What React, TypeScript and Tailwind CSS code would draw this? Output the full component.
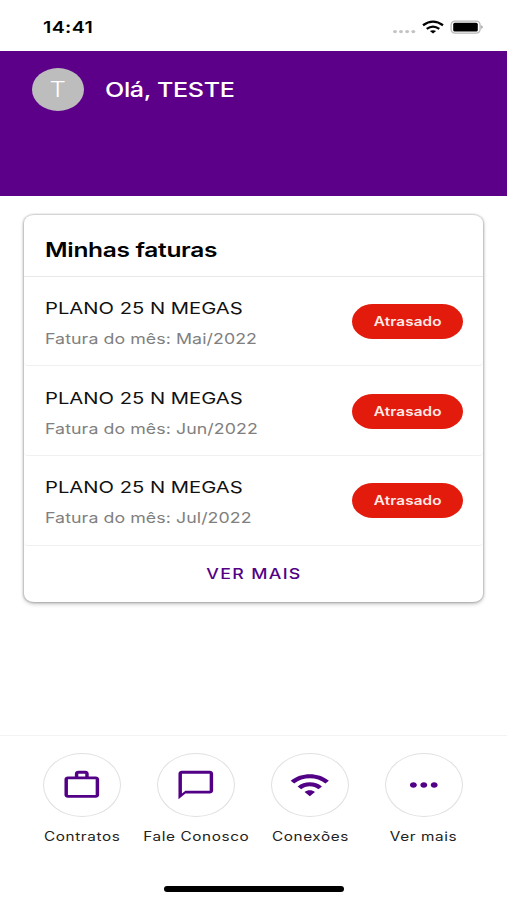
import type { ReactNode } from "react";

const invoices = [
  { plan: "PLANO 25 N MEGAS", month: "Mai/2022" },
  { plan: "PLANO 25 N MEGAS", month: "Jun/2022" },
  { plan: "PLANO 25 N MEGAS", month: "Jul/2022" },
];

const shortcuts = [
  {
    label: "Contratos",
    path: "M14 6V4h-4v2h4zM4 8v11h16V8H4zm16-2c1.11 0 2 .89 2 2v11c0 1.11-.89 2-2 2H4c-1.11 0-2-.89-2-2l.01-11c0-1.11.88-2 1.99-2h4V4c0-1.11.89-2 2-2h4c1.11 0 2 .89 2 2v2h4z",
  },
  {
    label: "Fale Conosco",
    path: "M20 2H4c-1.1 0-2 .9-2 2v18l4-4h14c1.1 0 2-.9 2-2V4c0-1.1-.9-2-2-2zm0 14H6l-2 2V4h16v12z",
  },
  {
    label: "Conexões",
    path: "M1 9l2 2c4.97-4.97 13.03-4.97 18 0l2-2C16.93 2.93 7.08 2.93 1 9zm8 8l3 3 3-3c-1.65-1.66-4.34-1.66-6 0zm-4-4l2 2c2.76-2.76 7.24-2.76 10 0l2-2C15.14 9.14 8.87 9.14 5 13z",
  },
  {
    label: "Ver mais",
    path: "M6 10c-1.1 0-2 .9-2 2s.9 2 2 2 2-.9 2-2-.9-2-2-2zm12 0c-1.1 0-2 .9-2 2s.9 2 2 2 2-.9 2-2-.9-2-2-2zm-6 0c-1.1 0-2 .9-2 2s.9 2 2 2 2-.9 2-2-.9-2-2-2z",
  },
];

// Wide text: everything on this screen is set in an extended face
const Wide = ({ className, children }: { className: string; children: ReactNode }) => (
  <span className={`block w-max scale-x-[1.2246] whitespace-nowrap ${className}`}>{children}</span>
);

const StatusBar = () => (
  <div className="flex h-[51px] shrink-0 items-center justify-between pt-[3px] pr-[24px] pl-[43px]">
    <Wide className="origin-left text-[16px] leading-5 font-semibold tracking-[0.3px] text-black">14:41</Wide>
    <svg className="h-[14px] w-[91px]" viewBox="0 0 91 14">
      {[3, 9, 15.1, 21.3].map((x) => (
        <ellipse key={x} cx={x} cy="11.6" rx="2" ry="1.7" fill="#c4c4c4" />
      ))}
      {/* Wi-Fi */}
      <g fill="none" stroke="#000" strokeWidth="2.3">
        <path d="M31 5.2Q41 -2 51 5.2" />
        <path d="M34.7 8.9Q41 4.3 47.3 8.9" />
      </g>
      <path d="M37.9 11.1Q41 9.2 44.1 11.1L41 13.4Z" />
      {/* Battery */}
      <rect x="59.1" y="1.1" width="29" height="12" rx="3.8" fill="none" stroke="#b8b8b8" strokeWidth="1.3" />
      <rect x="61.2" y="2.7" width="24.6" height="8.8" rx="1.6" />
      <path d="M89.2 5.3q1.6.5 1.6 1.8T89.2 8.9z" fill="#a0a0a0" />
    </svg>
  </div>
);

const Header = () => (
  <header className="flex h-[144.5px] shrink-0 items-start bg-[#5c008a] px-[32px] pt-[17px] text-white">
    <div className="flex h-[43px] w-[52px] items-center justify-center rounded-[50%] bg-[#bdbdbd]">
      <Wide className="text-[21px] leading-6 font-light">T</Wide>
    </div>
    <Wide className="mt-[10px] ml-[21px] origin-left text-[20.5px] leading-6 font-medium tracking-[-0.3px]">
      Olá, TESTE
    </Wide>
  </header>
);

const InvoiceRow = ({ plan, month }: { plan: string; month: string }) => (
  <li className="flex h-[89.6px] items-center justify-between rounded-b-[4px] border-b border-[#f0f0f0] pt-px pr-[20px] pl-[21px]">
    <div className="pt-[4px]">
      <Wide className="origin-left text-[16.5px] leading-5 text-[#111]">{plan}</Wide>
      <Wide className="mt-[11px] origin-left text-[14.5px] leading-5 tracking-[0.06px] text-[#808080]">
        Fatura do mês: {month}
      </Wide>
    </div>
    <div className="flex h-[35px] w-[111px] items-center justify-center rounded-[21px/17.5px] bg-[#e31b0c]">
      <Wide className="pt-px text-[12.5px] leading-4 font-semibold tracking-[0.1px] text-[#ffe9e6]">Atrasado</Wide>
    </div>
  </li>
);

const InvoiceCard = () => (
  <section className="mx-[24px] mt-[19px] h-[387px] shrink-0 rounded-[10px/8px] bg-white shadow-[0_0_2px_1px_rgba(0,0,0,0.2),0_2px_4px_rgba(0,0,0,0.22)]">
    <div className="flex h-[62.3px] items-center border-b border-[#e8e8e8] pt-[9px] pl-[21px]">
      <Wide className="origin-left text-[20px] leading-6 font-semibold tracking-[-0.25px] text-black">
        Minhas faturas
      </Wide>
    </div>
    <ul>
      {invoices.map((invoice) => (
        <InvoiceRow key={invoice.month} {...invoice} />
      ))}
    </ul>
    <button className="flex h-[56px] w-full items-center justify-center pt-px">
      <Wide className="text-[14.5px] leading-5 font-medium tracking-[1.1px] text-[#540085]">VER MAIS</Wide>
    </button>
  </section>
);

const BottomNav = () => (
  <nav className="mt-auto flex h-[165px] shrink-0 flex-col items-center border-t border-[#f3f3f3] pt-[17px]">
    <div className="mr-px grid w-[456px] grid-cols-4">
      {shortcuts.map(({ label, path }) => (
        <button key={label} className="flex flex-col items-center">
          <div className="flex h-[64px] w-[78px] items-center justify-center rounded-[50%] border border-[#e0e0e0]">
            <svg className="h-[34px] w-[41.6px]" viewBox="0 0 24 24" preserveAspectRatio="none" fill="#520085">
              <path d={path} />
            </svg>
          </div>
          <Wide className="mt-[12px] text-[12.5px] leading-4 tracking-[0.5px] text-[#222]">{label}</Wide>
        </button>
      ))}
    </div>
    <div className="mt-auto mb-[8px] h-[6px] w-[180px] rounded-full bg-black" />
  </nav>
);

const App = () => {
  return (
    <div className="flex h-[900px] w-[507px] flex-col overflow-hidden bg-white font-['Inter',sans-serif]">
      <StatusBar />
      <Header />
      <InvoiceCard />
      <BottomNav />
    </div>
  );
};

export default App;
